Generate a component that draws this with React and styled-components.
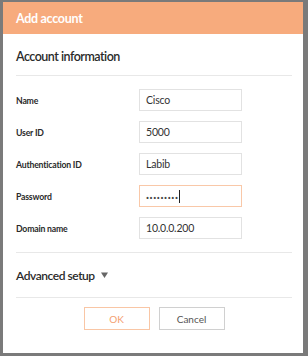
import React from "react";
import styled, { createGlobalStyle } from "styled-components";

const Global = createGlobalStyle`
  html, body { margin: 0; padding: 0; }
  body {
    background: #7a7a7a;
    font-family: Lato, "Open Sans", sans-serif;
    width: 308px;
    height: 356px;
    overflow: hidden;
  }
`;

const Backdrop = styled.div`
  width: 308px;
  height: 356px;
  padding: 2px 5px 3px 3px;
  box-sizing: border-box;
`;

const Dialog = styled.div`
  width: 300px;
  height: 351px;
  background: #ffffff;
  display: flex;
  flex-direction: column;
`;

const Header = styled.div`
  height: 32px;
  background: #f7ab7d;
  color: #ffffff;
  font-weight: 700;
  font-size: 12.5px;
  letter-spacing: -0.3px;
  display: flex;
  align-items: center;
  padding: 0 13px;
`;

const Body = styled.div`
  padding: 0 11px 0 13px;
  display: flex;
  flex-direction: column;
`;

const SectionTitle = styled.div`
  height: 42px;
  padding-top: 4px;
  box-sizing: border-box;
  display: flex;
  align-items: center;
  font-size: 12.5px;
  font-weight: 600;
  letter-spacing: -0.5px;
  color: #2a2a2a;
  border-bottom: 1px solid #e8e8e8;
`;

const Form = styled.div`
  display: flex;
  flex-direction: column;
  gap: 10px;
  padding: 13px 0 13px;
  border-bottom: 1px solid #e8e8e8;
`;

const Row = styled.div`
  display: grid;
  grid-template-columns: 123px 103px;
  align-items: center;
`;

const Label = styled.div`
  font-size: 8.7px;
  font-weight: 700;
  letter-spacing: -0.2px;
  color: #2a2a2a;
`;

const Field = styled.div`
  height: 22px;
  box-sizing: border-box;
  border: 1px solid ${(p) => (p.$active ? "#f9c8a8" : "#e2e2e2")};
  padding: 0 6px;
  display: flex;
  align-items: center;
  font-size: 10.5px;
  letter-spacing: -0.2px;
  color: #333;
`;

const Dots = styled.span`
  font-size: 11px;
  font-weight: 700;
  letter-spacing: 0.6px;
  color: #444;
`;

const Caret = styled.span`
  display: inline-block;
  width: 1px;
  height: 13px;
  background: #222;
`;

const Advanced = styled.div`
  height: 44px;
  display: flex;
  align-items: center;
  gap: 6px;
  font-size: 12px;
  font-weight: 600;
  letter-spacing: -0.45px;
  color: #2a2a2a;
  border-bottom: 1px solid #e8e8e8;
`;

const Buttons = styled.div`
  display: flex;
  justify-content: center;
  gap: 9px;
  padding-top: 9px;
`;

const Button = styled.div`
  width: 66px;
  height: 23px;
  box-sizing: border-box;
  border: 1px solid ${(p) => (p.$primary ? "#f9c6a5" : "#d0d0d0")};
  color: ${(p) => (p.$primary ? "#f4a070" : "#555")};
  font-size: 10px;
  display: flex;
  align-items: center;
  justify-content: center;
`;

const fields = [
  { label: "Name", value: "Cisco" },
  { label: "User ID", value: "5000" },
  { label: "Authentication ID", value: "Labib" },
  { label: "Password", password: true },
  { label: "Domain name", value: "10.0.0.200" },
];

export default function App() {
  return (
    <>
      <Global />
      <Backdrop>
        <Dialog>
          <Header>Add account</Header>
          <Body>
            <SectionTitle>Account information</SectionTitle>
            <Form>
              {fields.map((f) => (
                <Row key={f.label}>
                  <Label>{f.label}</Label>
                  <Field $active={f.password}>
                    {f.password ? (
                      <>
                        <Dots>·········</Dots>
                        <Caret />
                      </>
                    ) : (
                      f.value
                    )}
                  </Field>
                </Row>
              ))}
            </Form>
            <Advanced>
              Advanced setup
              <svg width="7" height="6" viewBox="0 0 7 6">
                <path d="M0 0.5 H7 L3.5 6 Z" fill="#666" />
              </svg>
            </Advanced>
            <Buttons>
              <Button $primary>OK</Button>
              <Button>Cancel</Button>
            </Buttons>
          </Body>
        </Dialog>
      </Backdrop>
    </>
  );
}
